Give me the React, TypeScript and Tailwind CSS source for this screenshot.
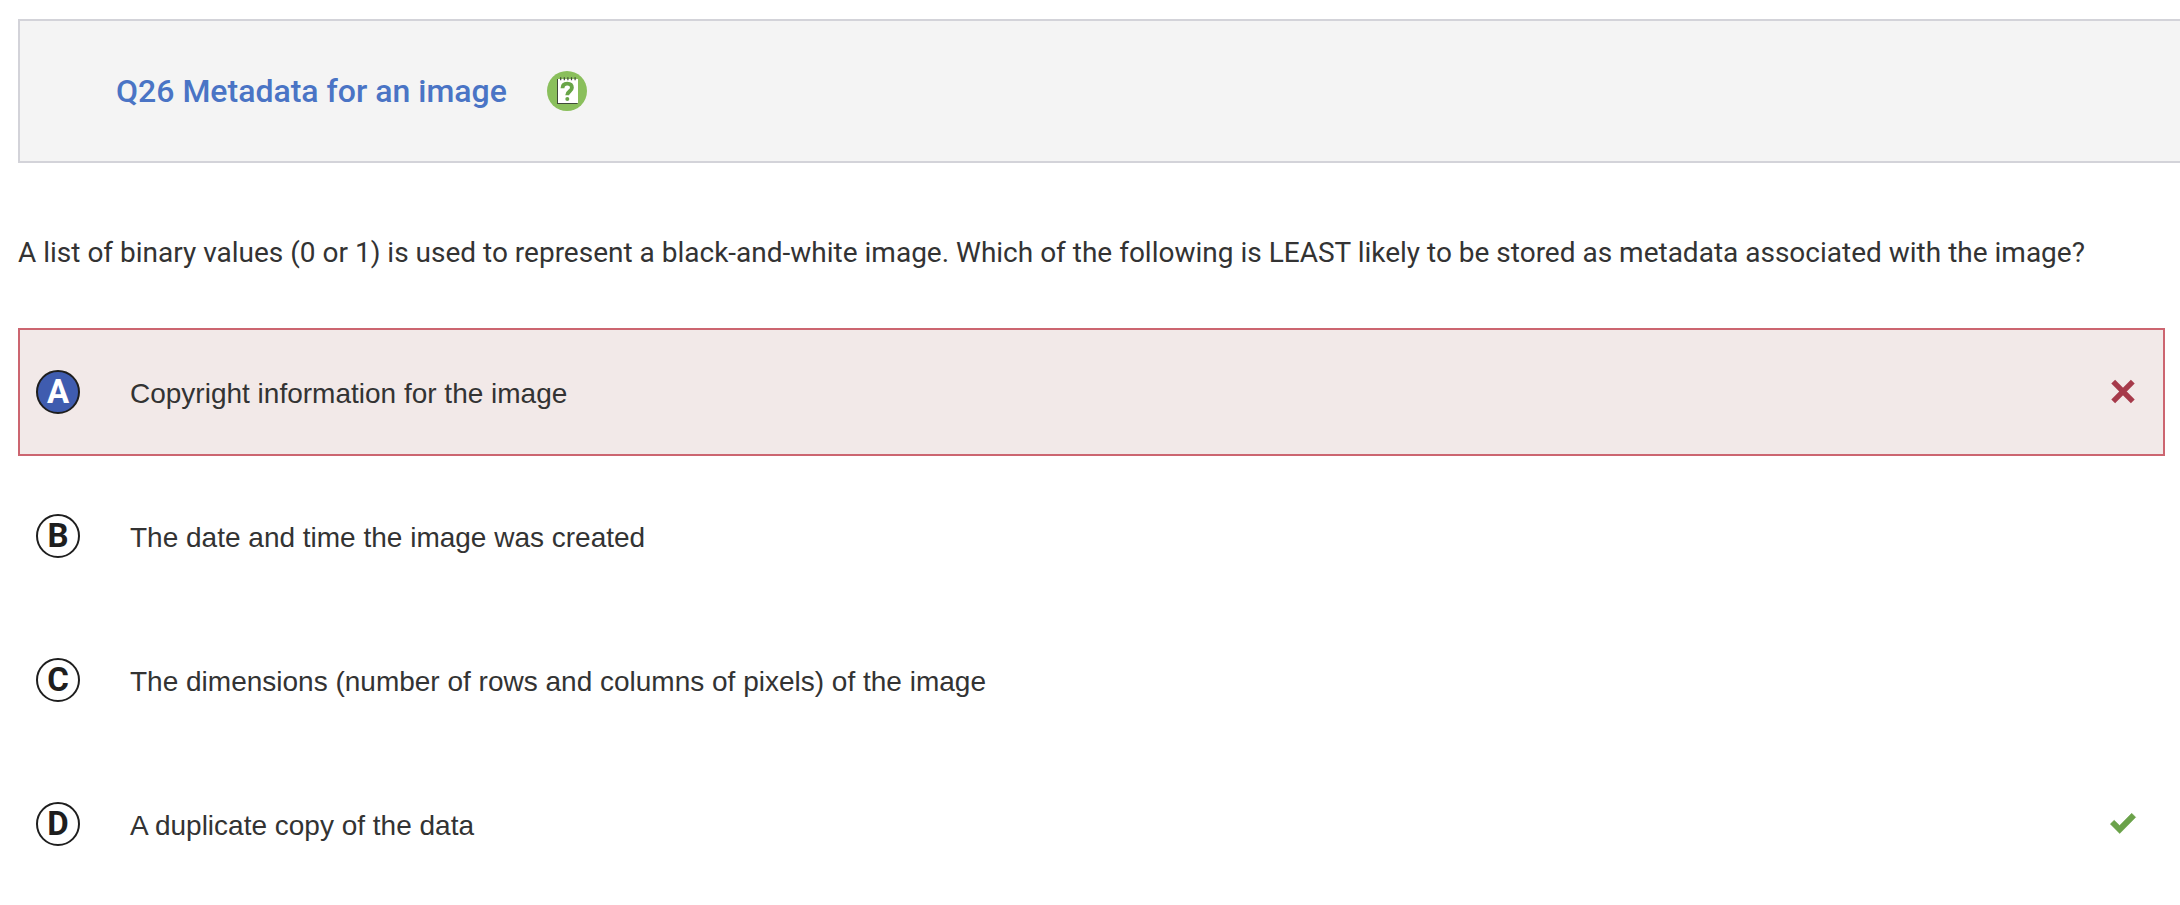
import { useState } from "react";

type Mark = "wrong" | "right" | null;

const options: { letter: string; text: string; mark: Mark }[] = [
  { letter: "A", text: "Copyright information for the image", mark: "wrong" },
  { letter: "B", text: "The date and time the image was created", mark: null },
  { letter: "C", text: "The dimensions (number of rows and columns of pixels) of the image", mark: null },
  { letter: "D", text: "A duplicate copy of the data", mark: "right" },
];

function QuizIcon() {
  return (
    <svg viewBox="0 0 40 40" className="size-10 shrink-0" aria-hidden="true">
      <circle cx="20" cy="20" r="20" fill="#8abf5c" />
      <rect x="10" y="8" width="20.5" height="25" fill="#3f4a38" />
      <rect x="11" y="8" width="20" height="24" fill="#ffffff" />
      <path d="M13.7 6.3v3M17.3 6.3v3M20.9 6.3v3M24.5 6.3v3M28.1 6.3v3" stroke="#3f4a38" strokeWidth="1.2" />
      <path
        d="M15.5 17.2c0-3 1.9-4.6 4.7-4.6 2.8 0 4.7 1.5 4.7 4.1 0 3.8-4.7 3.6-4.7 7.5"
        fill="none"
        stroke="#68a548"
        strokeWidth="3.9"
      />
      <circle cx="20.3" cy="27.9" r="2" fill="#68a548" />
    </svg>
  );
}

function MarkIcon({ mark }: { mark: Mark }) {
  if (mark === "wrong") {
    return (
      <svg viewBox="0 0 28 28" className="size-7 shrink-0" role="img" aria-label="Incorrect">
        <path d="M4.2 3.7L23.8 23.3M23.8 3.7L4.2 23.3" stroke="#a63a4a" strokeWidth="5.4" />
      </svg>
    );
  }
  if (mark === "right") {
    return (
      <svg viewBox="0 0 28 28" className="size-7 shrink-0" role="img" aria-label="Correct">
        <path
          d="M1.3 14L5.2 10.2L10.6 15.5L22.7 3.3L26.7 7.3L10.7 23.5Z"
          fill="#6ba24a"
          stroke="#6ba24a"
          strokeWidth="0.5"
          strokeLinejoin="round"
        />
      </svg>
    );
  }
  return null;
}

export default function App() {
  const [selected, setSelected] = useState("A");

  return (
    <main className="overflow-x-clip bg-white pt-[19px] font-['Roboto',sans-serif] text-[#333333]">
      <header className="ml-[18px] flex h-36 items-center gap-10 border-2 border-r-0 border-[#d3d3d9] bg-[#f4f4f4] pl-24">
        <h1 className="text-[32px] leading-10 font-medium text-[#4a74c5]">Q26 Metadata for an image</h1>
        <QuizIcon />
      </header>
      <fieldset className="mr-[15px] ml-[18px] pt-[70px]">
        <legend className="contents">
          <span className="block text-[28px] leading-10">
            A list of binary values (0 or 1) is used to represent a black-and-white image. Which of the following is LEAST
            likely to be stored as metadata associated with the image?
          </span>
        </legend>
        <div className="mt-[55px] flex flex-col gap-4">
          {options.map(({ letter, text, mark }) => (
            <label
              key={letter}
              className={
                "relative flex h-32 cursor-pointer items-center border-2 pr-[26px] pl-4 " +
                (mark === "wrong" ? "border-[#cc6570] bg-[#f2e9e8]" : "border-transparent")
              }
            >
              <input
                type="radio"
                name="answer"
                value={letter}
                checked={selected === letter}
                onChange={() => setSelected(letter)}
                className="peer sr-only"
              />
              <span className="flex size-11 shrink-0 items-center justify-center rounded-full border-2 border-[#1e1e1e] text-[33px] leading-9 font-bold text-[#1e1e1e] peer-checked:bg-[#3f5caf] peer-checked:text-white">
                {letter}
              </span>
              <span className="ml-[50px] flex-1 pt-[3px] font-['Liberation_Sans',Arial,sans-serif] text-[28px] leading-8">
                {text}
              </span>
              <MarkIcon mark={mark} />
            </label>
          ))}
        </div>
      </fieldset>
    </main>
  );
}
